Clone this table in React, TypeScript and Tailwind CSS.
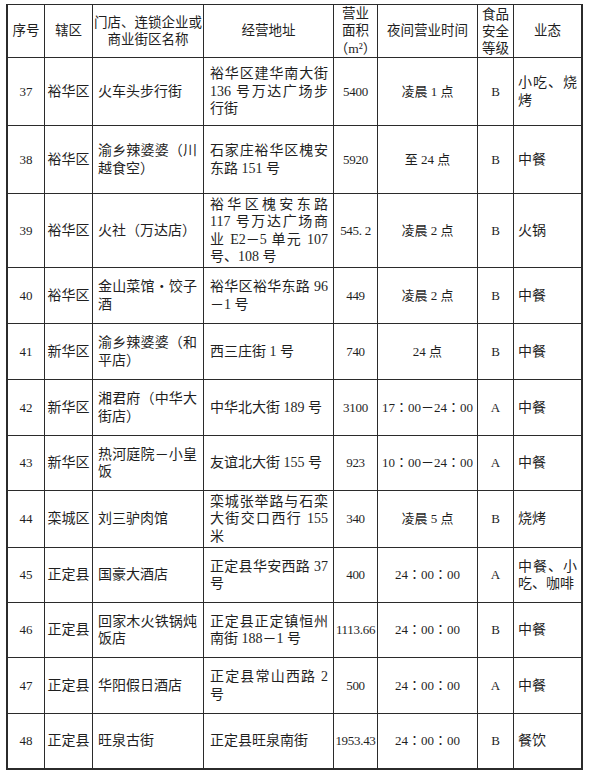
import React from 'react';

type Row = {
	no: string;
	district: string;
	name: string[];
	addr: string[];
	area: string;
	time: string;
	grade: string;
	kind: string[];
};

const rows: Row[] = [
	{ no: '37', district: '裕华区', name: ['火车头步行街'], addr: ['裕华区建华南大街', '136 号万达广场步', '行街'], area: '5400', time: '凌晨 1 点', grade: 'B', kind: ['小吃、烧', '烤'] },
	{ no: '38', district: '裕华区', name: ['渝乡辣婆婆（川', '越食空）'], addr: ['石家庄裕华区槐安', '东路 151 号'], area: '5920', time: '至 24 点', grade: 'B', kind: ['中餐'] },
	{ no: '39', district: '裕华区', name: ['火社（万达店）'], addr: ['裕华区槐安东路', '117 号万达广场商', '业 E2－5 单元 107', '号、108 号'], area: '545. 2', time: '凌晨 2 点', grade: 'B', kind: ['火锅'] },
	{ no: '40', district: '裕华区', name: ['金山菜馆・饺子', '酒'], addr: ['裕华区裕华东路 96', '－1 号'], area: '449', time: '凌晨 2 点', grade: 'B', kind: ['中餐'] },
	{ no: '41', district: '新华区', name: ['渝乡辣婆婆（和', '平店）'], addr: ['西三庄街 1 号'], area: '740', time: '24 点', grade: 'B', kind: ['中餐'] },
	{ no: '42', district: '新华区', name: ['湘君府（中华大', '街店）'], addr: ['中华北大街 189 号'], area: '3100', time: '17：00－24：00', grade: 'A', kind: ['中餐'] },
	{ no: '43', district: '新华区', name: ['热河庭院－小皇', '饭'], addr: ['友谊北大街 155 号'], area: '923', time: '10：00－24：00', grade: 'A', kind: ['中餐'] },
	{ no: '44', district: '栾城区', name: ['刘三驴肉馆'], addr: ['栾城张举路与石栾', '大街交口西行 155', '米'], area: '340', time: '凌晨 5 点', grade: 'B', kind: ['烧烤'] },
	{ no: '45', district: '正定县', name: ['国豪大酒店'], addr: ['正定县华安西路 37', '号'], area: '400', time: '24：00：00', grade: 'A', kind: ['中餐、小', '吃、咖啡'] },
	{ no: '46', district: '正定县', name: ['回家木火铁锅炖', '饭店'], addr: ['正定县正定镇恒州', '南街 188－1 号'], area: '1113.66', time: '24：00：00', grade: 'B', kind: ['中餐'] },
	{ no: '47', district: '正定县', name: ['华阳假日酒店'], addr: ['正定县常山西路 2', '号'], area: '500', time: '24：00：00', grade: 'A', kind: ['中餐'] },
	{ no: '48', district: '正定县', name: ['旺泉古街'], addr: ['正定县旺泉南街'], area: '1953.43', time: '24：00：00', grade: 'B', kind: ['餐饮'] },
];

const Lines = ({ lines }: { lines: string[] }) => (
	<div className="w-full">
		{lines.map((l, i) => (
			<div
				key={i}
				className={i < lines.length - 1 ? 'text-justify [text-align-last:justify]' : 'text-left'}>
				{l}
			</div>
		))}
	</div>
);

const cell = 'bg-white flex items-center';

export default function App() {
	return (
		<div
			className="w-[590px] h-[777px] bg-white pt-[4px] pl-[6px] text-[#1f1f1f] text-[14px] leading-[17.5px]"
			style={{ fontFamily: '"Liberation Serif", "Noto Sans CJK SC", serif' }}>
			<div className="w-[577px] border-t border-l-2 border-r-2 border-b-2 border-[#2b2b2b] bg-[#2b2b2b] grid gap-px grid-cols-[36px_47px_110px_129px_43px_99px_35px_67px] grid-rows-[52px_67px_67px_73px_55px_55px_55px_54px_56px_54px_54px_55px_54px]">
				{/* Header */}
				<div className={`${cell} justify-center text-[13.5px]`}>序号</div>
				<div className={`${cell} justify-center text-[13.5px]`}>辖区</div>
				<div className={`${cell} justify-center text-center text-[13.5px] leading-[17px]`}>
					<div>
						<div>门店、连锁企业或</div>
						<div>商业街区名称</div>
					</div>
				</div>
				<div className={`${cell} justify-center text-[13.5px]`}>经营地址</div>
				<div className={`${cell} justify-center text-center text-[13.5px] leading-[17.5px]`}>
					<div>
						<div>营业</div>
						<div>面积</div>
						<div>（m²）</div>
					</div>
				</div>
				<div className={`${cell} justify-center text-[13.5px]`}>夜间营业时间</div>
				<div className={`${cell} justify-center text-center text-[13.5px] leading-[17px]`}>
					<div>
						<div>食品</div>
						<div>安全</div>
						<div>等级</div>
					</div>
				</div>
				<div className={`${cell} justify-center text-[13.5px]`}>业态</div>

				{rows.map((r) => (
					<React.Fragment key={r.no}>
						<div className={`${cell} justify-center text-[13px]`}>{r.no}</div>
						<div className={`${cell} justify-center`}>{r.district}</div>
						<div className={`${cell} pl-[5px] pr-[6px]`}>
							<Lines lines={r.name} />
						</div>
						<div className={`${cell} pl-[6px] pr-[5px]`}>
							<Lines lines={r.addr} />
						</div>
						<div className={`${cell} justify-center text-[13px] tracking-[-0.3px] whitespace-nowrap`}>{r.area}</div>
						<div
							className={`${cell} justify-center text-[13px] whitespace-nowrap`}
							style={{ fontFamily: '"Liberation Serif", "Noto Sans CJK TC", serif' }}>
							{r.time}
						</div>
						<div className={`${cell} justify-center text-[13px]`}>{r.grade}</div>
						<div className={`${cell} pl-[4px] pr-[4px]`}>
							<Lines lines={r.kind} />
						</div>
					</React.Fragment>
				))}
			</div>
		</div>
	);
}
